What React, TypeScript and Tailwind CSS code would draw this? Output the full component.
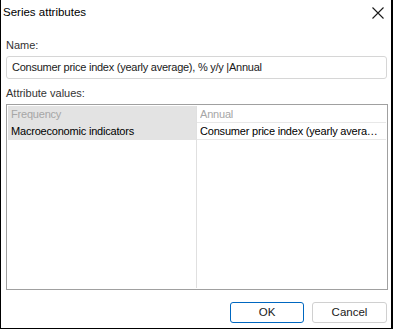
import React from 'react';

const ui = { fontFamily: '"Liberation Sans", Arial, sans-serif' };

const rows = [
  { attr: 'Frequency', value: 'Annual', muted: true },
  { attr: 'Macroeconomic indicators', value: 'Consumer price index (yearly average), % y/y', muted: false },
];

const App: React.FC = () => {
  return (
    <div className="w-[393px] h-[329px] bg-white border-l border-r-2 border-b border-black flex flex-col text-[11px]" style={ui}>
      {/* Title bar */}
      <div className="h-[26px] flex items-center justify-between pl-[2px] pr-[4px]">
        <span className="text-[#000] text-[11.5px] leading-none">Series attributes</span>
        <svg width="14" height="14" viewBox="0 0 14 14" className="mr-[2px]">
          <path d="M1.5 1.5 L12.5 12.5 M12.5 1.5 L1.5 12.5" stroke="#1a1a1a" strokeWidth="1.1" />
        </svg>
      </div>

      <div className="flex-1 flex flex-col pl-[5px] pr-[3px]">
        <div className="mt-[11px] h-[16px] flex items-center text-[#333]">Name:</div>
        <div className="mt-[3px] h-[23px] border border-[#d6d6d6] rounded-[3px] flex items-center px-[5px] text-[#1a1a1a] tracking-[-0.25px] mr-[1px]">
          Consumer price index (yearly average), % y/y |Annual
        </div>

        <div className="mt-[6px] h-[16px] flex items-center text-[#333]">Attribute values:</div>

        <div className="mt-[3px] h-[186px] border border-[#a0a0a0] p-[1px] flex tracking-[-0.2px]">
          <div className="w-[189px] flex flex-col border-r border-[#e0e0e0]">
            {rows.map((r) => (
              <div
                key={r.attr}
                className={`h-[17px] flex items-center px-[3px] bg-[#e3e3e3] whitespace-nowrap ${r.muted ? 'text-[#a6a6a6]' : 'text-[#000]'}`}
              >
                {r.attr}
              </div>
            ))}
          </div>
          <div className="flex-1 min-w-0 flex flex-col">
            {rows.map((r) => (
              <div
                key={r.attr}
                className={`h-[17px] flex items-center px-[3px] border-b border-[#e8e8e8] overflow-hidden ${r.muted ? 'text-[#a6a6a6]' : 'text-[#000]'}`}
              >
                <span className="truncate">{r.value}</span>
              </div>
            ))}
          </div>
        </div>

        <div className="mt-[12px] flex justify-end gap-[8px] mr-[1px]">
          <button className="w-[74px] h-[21px] border border-[#0067c0] rounded-[3px] bg-white text-[#1a1a1a] text-[11.5px] flex items-center justify-center">
            OK
          </button>
          <button className="w-[75px] h-[21px] border border-[#d0d0d0] rounded-[3px] bg-white text-[#1a1a1a] text-[11.5px] flex items-center justify-center">
            Cancel
          </button>
        </div>
      </div>
    </div>
  );
};

export default App;
